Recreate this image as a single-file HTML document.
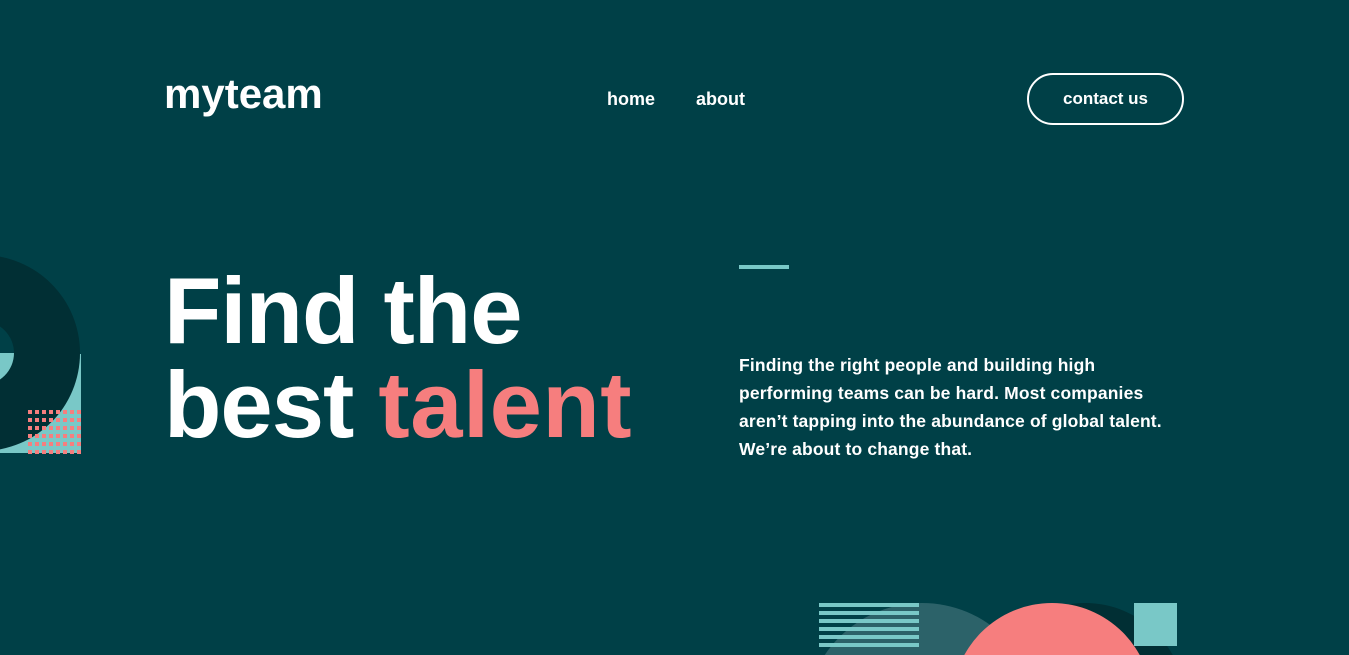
<!DOCTYPE html>
<html><head><style>
*{margin:0;padding:0;box-sizing:border-box}
body{width:1349px;height:655px;overflow:hidden;background:#004047;font-family:"Liberation Sans",sans-serif;color:#fff;position:relative;font-weight:bold}
.a{position:absolute}
</style></head><body>
<div class="a" style="left:164px;top:70px;font-size:42px;letter-spacing:0">myteam</div>
<div class="a" style="left:607px;top:89px;font-size:18px">home</div>
<div class="a" style="left:696px;top:89px;font-size:18px">about</div>
<div class="a" style="left:1027px;top:73px;width:157px;height:52px;border:2px solid #fff;border-radius:26px;font-size:17px;text-align:center;line-height:48px">contact us</div>

<div class="a" style="left:164px;top:264px;font-size:94px;line-height:94px;letter-spacing:-1px">Find the<br>best <span style="color:#F67E7E;letter-spacing:0.5px">talent</span></div>
<div class="a" style="left:739px;top:265px;width:50px;height:4px;background:#79C8C7"></div>
<div class="a" style="left:739px;top:351px;white-space:nowrap;font-size:17.5px;line-height:28px;letter-spacing:0.15px">Finding the right people and building high<br>performing teams can be hard. Most companies<br>aren’t tapping into the abundance of global talent.<br>We’re about to change that.</div>

<svg class="a" style="left:0;top:240px" width="100" height="230">
<rect x="0" y="114" width="81" height="99" fill="#79C8C7"/>
<circle cx="-18" cy="113" r="98" fill="#012F34"/>
<path d="M-50 113a32 32 0 0 1 64 0z" fill="#004047"/>
<path d="M-50 113a32 32 0 0 0 64 0z" fill="#79C8C7"/>
<pattern id="p" x="28" y="170" width="7" height="8" patternUnits="userSpaceOnUse"><rect width="4" height="4" fill="#F67E7E"/></pattern>
<rect x="28" y="170" width="53" height="44" fill="url(#p)"/>
</svg>

<svg class="a" style="left:800px;top:590px" width="400" height="65">
<circle cx="122" cy="130" r="117" fill="#2C6269"/>
<circle cx="285" cy="113" r="100" fill="#012F34"/>
<circle cx="252" cy="113" r="100" fill="#F67E7E"/>
<rect x="334" y="13" width="43" height="43" fill="#79C8C7"/>
<g fill="#79C8C7">
<rect x="19" y="13" width="100" height="4"/><rect x="19" y="21" width="100" height="4"/><rect x="19" y="29" width="100" height="4"/><rect x="19" y="37" width="100" height="4"/><rect x="19" y="45" width="100" height="4"/><rect x="19" y="53" width="100" height="4"/>
</g>
</svg>
</body></html>
